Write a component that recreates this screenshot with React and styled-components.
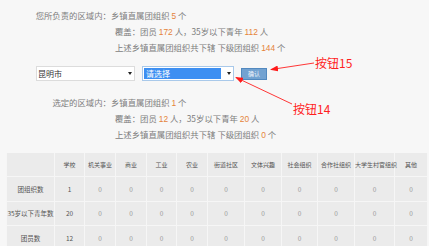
import styled, { createGlobalStyle } from "styled-components"

const GlobalStyle = createGlobalStyle`
  html, body {
    margin: 0;
    padding: 0;
    background: #f7f7f7;
  }
  body {
    font-family: "Noto Sans CJK SC", "Noto Sans", sans-serif;
  }
`

const columns = [48, 30, 31, 31, 30, 31, 37, 37, 36, 37, 40, 33]
const heads = ["", "学校", "机关事业", "商业", "工业", "农业", "街道社区", "文体兴趣", "社会组织", "合作社组织", "大学生村官组织", "其他"]
const rows = [
  { name: "团组织数", values: [1, 0, 0, 0, 0, 0, 0, 0, 0, 0, 0], h: 25 },
  { name: "35岁以下青年数", values: [20, 0, 0, 0, 0, 0, 0, 0, 0, 0, 0], h: 24 },
  { name: "团员数", values: [12, 0, 0, 0, 0, 0, 0, 0, 0, 0, 0], h: 25 },
]

function Summary({ label, orgs, members, youth, subs, top }) {
  return (
    <SummaryGrid top={top}>
      <Label>{label}</Label>
      <Value>乡镇直属团组织 <Num>{orgs}</Num> 个</Value>
      <Label />
      <Value indent>覆盖：团员 <Num>{members}</Num> 人，35岁以下青年 <Num>{youth}</Num> 人</Value>
      <Label />
      <Value indent>上述乡镇直属团组织共下辖 下级团组织 <Num>{subs}</Num> 个</Value>
    </SummaryGrid>
  )
}

export default function App() {
  return (
    <Page>
      <GlobalStyle />
      <Summary label="您所负责的区域内：" orgs={5} members={172} youth={112} subs={144} top={8} />
      <FilterRow>
        <Select width={99}>
          <SelectText>昆明市</SelectText>
          <Caret />
        </Select>
        <Select width={92} focused>
          <Highlight>请选择</Highlight>
          <Caret />
        </Select>
        <Button>确认</Button>
      </FilterRow>
      <Summary label="选定的区域内：" orgs={1} members={12} youth={20} subs={0} top={14} />
      <Table>
        <colgroup>
          {columns.map((w, i) => <col key={i} style={{ width: w }} />)}
        </colgroup>
        <thead>
          <Row h={23}>
            {heads.map((t, i) => <Head key={i}>{t}</Head>)}
          </Row>
        </thead>
        <tbody>
          {rows.map(r => (
            <Row key={r.name} h={r.h}>
              <Cell dark>{r.name}</Cell>
              {r.values.map((v, i) => <Cell key={i} dark={i === 0}>{v}</Cell>)}
            </Row>
          ))}
        </tbody>
      </Table>
      <Overlay viewBox="0 0 429 246" width="429" height="246">
        <defs>
          <marker id="head" markerWidth="8" markerHeight="6" refX="7" refY="3" orient="auto" markerUnits="userSpaceOnUse">
            <path d="M0,0 L8,3 L0,6 Z" fill="#ff1a1a" />
          </marker>
        </defs>
        <line x1="314" y1="63" x2="271" y2="69.5" stroke="#ff2020" strokeWidth="0.9" markerEnd="url(#head)" />
        <line x1="292" y1="104" x2="236" y2="77.5" stroke="#ff2020" strokeWidth="0.9" markerEnd="url(#head)" />
      </Overlay>
      <Note style={{ left: 315, top: 55 }}>按钮15</Note>
      <Note style={{ left: 293, top: 101 }}>按钮14</Note>
    </Page>
  )
}

const Page = styled.div`
  position: relative;
  width: 429px;
  height: 246px;
  overflow: hidden;
  background: #f7f7f7;
`
const SummaryGrid = styled.div`
  display: grid;
  grid-template-columns: 111px 1fr;
  padding-top: ${p => p.top}px;
  font-size: 8.4px;
  line-height: 15px;
  color: #7d7d7d;
  white-space: nowrap;
`
const Label = styled.div`
  text-align: right;
`
const Value = styled.div`
  padding-left: ${p => (p.indent ? 4 : 0)}px;
`
const Num = styled.span`
  color: #e5843a;
  font-family: "Liberation Sans", sans-serif;
`
const FilterRow = styled.div`
  display: flex;
  align-items: center;
  gap: 7px;
  padding-left: 36px;
  margin-top: 10px;
  height: 15px;
`
const Select = styled.div`
  box-sizing: border-box;
  width: ${p => p.width}px;
  height: 15px;
  display: flex;
  align-items: center;
  padding: 0 2px 0 1px;
  background: #ffffff;
  border: 1px solid ${p => (p.focused ? "#a9c9ea" : "#dcdcdc")};
`
const SelectText = styled.span`
  flex: 1;
  font-size: 8px;
  color: #333;
`
const Highlight = styled.span`
  flex: 1;
  height: 11px;
  margin-right: 6px;
  padding-left: 2px;
  background: #3d8ff2;
  color: #ffffff;
  font-size: 8px;
  line-height: 11px;
`
const Caret = styled.span`
  width: 0;
  height: 0;
  border-left: 2.5px solid transparent;
  border-right: 2.5px solid transparent;
  border-top: 3px solid #222;
`
const Button = styled.div`
  box-sizing: border-box;
  width: 26px;
  height: 12px;
  display: flex;
  align-items: center;
  justify-content: center;
  background: #72a2d1;
  border: 1px solid #5289bf;
  color: #eef4fa;
  font-size: 6px;
`
const Table = styled.table`
  margin: 10px 0 0 6px;
  width: 421px;
  table-layout: fixed;
  border-collapse: collapse;
  background: #ebebeb;
`
const Row = styled.tr`
  height: ${p => p.h}px;
`
const Head = styled.th`
  padding: 0;
  font-weight: normal;
  font-size: 6px;
  color: #555;
  white-space: nowrap;
  text-align: center;
  border: 1px solid #f6f6f6;
  border-top: none;
`
const Cell = styled.td`
  padding: 0;
  font-size: 6.5px;
  color: ${p => (p.dark ? "#555" : "#999")};
  white-space: nowrap;
  text-align: center;
  border: 1px solid #f6f6f6;
`
const Overlay = styled.svg`
  position: absolute;
  left: 0;
  top: 0;
  pointer-events: none;
`
const Note = styled.span`
  position: absolute;
  font-size: 12px;
  line-height: 16px;
  color: #ff1f1f;
  white-space: nowrap;
`
